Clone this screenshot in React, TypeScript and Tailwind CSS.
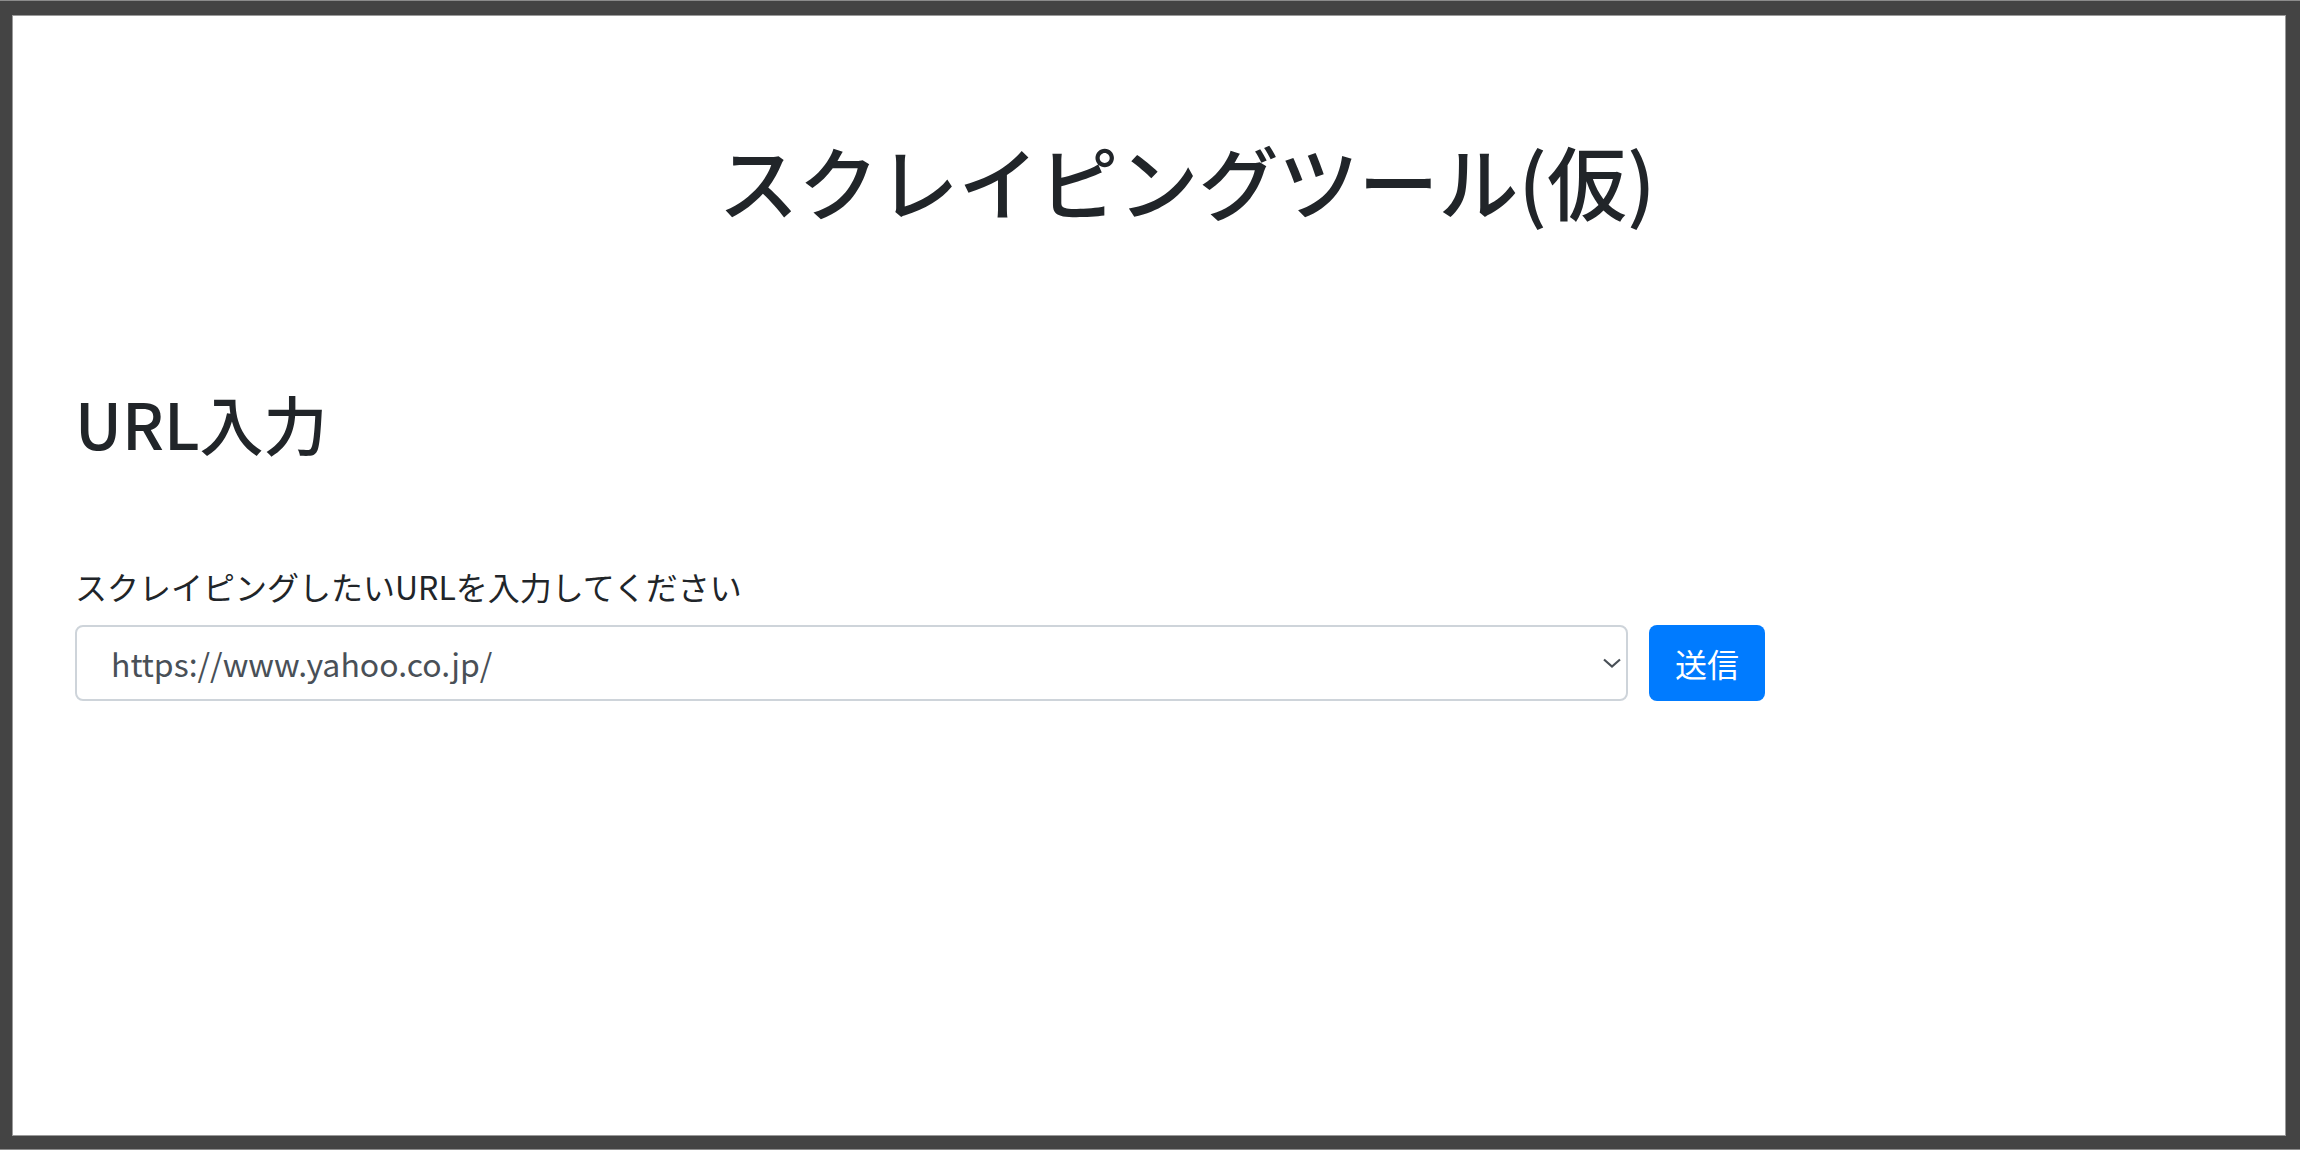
const font = { fontFamily: '"Noto Sans CJK JP", "Noto Sans", sans-serif' }

function UrlForm() {
   return (
      <div>
         <label className="mb-[15px] block text-[32px] leading-[48px] text-[#212529]">
            スクレイピングしたいURLを入力してください
         </label>
         <div className="flex items-center gap-[21px]">
            <div className="relative w-[1553px]">
               <select
                  defaultValue="https://www.yahoo.co.jp/"
                  className="block h-[76px] w-full appearance-none rounded-[8px] border-2 border-[#ced4da] bg-white pl-[34px] pr-[56px] text-[32px] text-[#495057] outline-none"
                  style={font}
               >
                  <option value="https://www.yahoo.co.jp/">https://www.yahoo.co.jp/</option>
                  <option value="https://www.google.co.jp/">https://www.google.co.jp/</option>
               </select>
               <svg
                  className="pointer-events-none absolute right-[7px] top-[33px]"
                  width="18"
                  height="10"
                  viewBox="0 0 18 10"
                  fill="none"
               >
                  <path d="M1 1.5 L9 8.5 L17 1.5" stroke="#495057" strokeWidth="2.2" />
               </svg>
            </div>
            <button
               className="h-[76px] w-[116px] rounded-[8px] bg-[#007bff] text-[32px] text-white"
               style={font}
            >
               送信
            </button>
         </div>
      </div>
   )
}

export default function App() {
   return (
      <div
         className="h-[1150px] w-[2300px] border-y border-[#8c8c8c] bg-[#444444] pb-[13px] pl-[12px] pr-[14px] pt-[14px]"
         style={font}
      >
         <div className="h-full w-full overflow-hidden border border-[#9a9a9a] bg-white">
            <div className="-mr-[14px] pl-[62px]">
               <h1 className="mt-[115px] text-center text-[80px] font-medium leading-[96px] text-[#212529]">
                  スクレイピングツール(仮)
               </h1>
               <h2 className="mt-[157px] text-[64px] font-medium leading-[77px] text-[#212529]">
                  URL入力
               </h2>
               <div className="mt-[101px]">
                  <UrlForm />
               </div>
            </div>
         </div>
      </div>
   )
}
